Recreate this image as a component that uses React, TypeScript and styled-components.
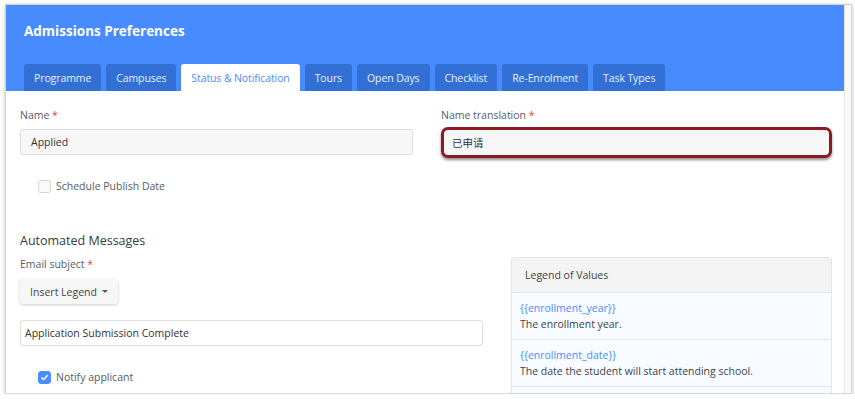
import * as React from 'react'
import styled, { createGlobalStyle } from 'styled-components'

const GlobalStyle = createGlobalStyle`
  html, body {
    margin: 0;
    padding: 0;
    background: #ffffff;
    font-family: 'Open Sans', 'Noto Sans CJK SC', sans-serif;
  }
`

const tabs = ['Programme', 'Campuses', 'Status & Notification', 'Tours', 'Open Days', 'Checklist', 'Re-Enrolment', 'Task Types']

const legend = [
  { key: '{{enrollment_year}}', text: 'The enrollment year.' },
  { key: '{{enrollment_date}}', text: 'The date the student will start attending school.' }
]

const Window = styled.div`
  margin: 4px 3px 0 5px;
  height: 390px;
  border: 1px solid #d4d4d4;
  box-shadow: 0 1px 4px rgba(0, 0, 0, 0.25);
  display: flex;
  overflow: hidden;
  box-sizing: border-box;
  background: #fff;
`

const Main = styled.div`
  flex: 1;
  min-width: 0;
`

const Gutter = styled.div`
  width: 6px;
  border-left: 1px solid #e6e6e6;
  background: #fafafa;
`

const Header = styled.div`
  background: #478bff;
  height: 86px;
  padding: 0 18px;
  display: flex;
  flex-direction: column;
  justify-content: space-between;
`

const Title = styled.h1`
  margin: 16px 0 0;
  color: #fff;
  font-size: 13.5px;
  font-weight: 700;
  line-height: 20px;
`

const TabRow = styled.div`
  display: flex;
  gap: 5px;
`

const Tab = styled.div<{ $active?: boolean }>`
  height: 27px;
  padding: 0 10px;
  display: flex;
  align-items: center;
  border-radius: 3px 3px 0 0;
  font-size: 10.5px;
  letter-spacing: -0.1px;
  background: ${p => (p.$active ? '#ffffff' : '#3270d6')};
  color: ${p => (p.$active ? '#4a8cff' : '#e9f0ff')};
`

const Body = styled.div`
  padding: 16px 12px 0 14px;
`

const Columns = styled.div<{ $left: number }>`
  display: grid;
  grid-template-columns: ${p => p.$left}px 1fr;
  column-gap: 28px;
  align-items: start;
`

const Label = styled.div`
  font-size: 10.5px;
  line-height: 16px;
  color: #555c66;
`

const Req = styled.span`
  color: #e8413b;
`

const Input = styled.div<{ $tone?: 'filled' | 'plain' }>`
  margin-top: 6px;
  height: 26px;
  box-sizing: border-box;
  border: 1px solid #dcdcdc;
  border-radius: 3px;
  padding: 0 10px;
  display: flex;
  align-items: center;
  font-size: 10.5px;
  color: #333;
  background: ${p => (p.$tone === 'plain' ? '#ffffff' : '#f7f7f7')};
`

const Highlight = styled(Input)`
  margin-top: 4px;
  height: 31px;
  border: 3px solid #8c1a1f;
  border-radius: 7px;
  background: #f7f7f7;
  box-shadow: 0 2px 3px rgba(0, 0, 0, 0.45);
  padding: 0 8px;
`

const CheckRow = styled.label<{ $top: number }>`
  margin: ${p => p.$top}px 0 0 18px;
  height: 16px;
  display: flex;
  align-items: center;
  gap: 5px;
  font-size: 10.5px;
  color: #555c66;
`

const Box = styled.span<{ $checked?: boolean }>`
  width: 13px;
  height: 13px;
  box-sizing: border-box;
  border-radius: 3px;
  display: flex;
  align-items: center;
  justify-content: center;
  border: 1px solid ${p => (p.$checked ? '#4a8cff' : '#d6d6d6')};
  background: ${p => (p.$checked ? '#4a8cff' : '#fafafa')};
`

const SectionTitle = styled.h2`
  margin: 37px 0 5px;
  font-size: 12.5px;
  font-weight: 400;
  line-height: 20px;
  color: #333a44;
`

const Button = styled.div`
  margin-top: 7px;
  width: 98px;
  height: 25px;
  box-sizing: border-box;
  display: flex;
  align-items: center;
  justify-content: center;
  gap: 5px;
  border-radius: 3px;
  background: #f7f7f7;
  box-shadow: 0 1px 3px rgba(0, 0, 0, 0.2);
  font-size: 10.5px;
  color: #444;
`

const Caret = styled.span`
  width: 0;
  height: 0;
  border-left: 3px solid transparent;
  border-right: 3px solid transparent;
  border-top: 3px solid #555;
`

const SubjectInput = styled(Input)`
  margin-top: 16px;
  padding: 0 4px;
`

const Panel = styled.div`
  margin-top: 1px;
  border: 1px solid #e2e5ea;
  border-radius: 3px 3px 0 0;
`

const PanelHead = styled.div`
  height: 34px;
  padding: 0 13px;
  display: flex;
  align-items: center;
  background: #f3f3f3;
  border-bottom: 1px solid #e2e5ea;
  font-size: 10.5px;
  color: #444;
`

const Item = styled.div`
  padding: 7px 8px 7px;
  background: #f8fbff;
  border-bottom: 1px solid #e2e8f0;
  font-size: 10.5px;
  line-height: 16px;
`

const Filler = styled.div`
  height: 40px;
  background: #f8fbff;
`

const Key = styled.div`
  color: #4a8cff;
`

const Desc = styled.div`
  color: #3d434b;
`

const Check = () => (
  <svg width='9' height='9' viewBox='0 0 10 10'>
    <path d='M1.8 5.2 L4 7.3 L8.3 2.8' fill='none' stroke='#fff' strokeWidth='1.6' strokeLinecap='round' strokeLinejoin='round' />
  </svg>
)

const App: React.FunctionComponent = () => (
  <>
    <GlobalStyle />
    <Window>
      <Main>
        <Header>
          <Title>Admissions Preferences</Title>
          <TabRow>
            { tabs.map(t => <Tab key={t} $active={t === 'Status & Notification'}>{ t }</Tab>) }
          </TabRow>
        </Header>
        <Body>
          <Columns $left={393}>
            <div>
              <Label>Name <Req>*</Req></Label>
              <Input>Applied</Input>
              <CheckRow $top={23}>
                <Box />
                Schedule Publish Date
              </CheckRow>
            </div>
            <div>
              <Label>Name translation <Req>*</Req></Label>
              <Highlight>已申请</Highlight>
            </div>
          </Columns>
          <SectionTitle>Automated Messages</SectionTitle>
          <Columns $left={463}>
            <div>
              <Label>Email subject <Req>*</Req></Label>
              <Button>Insert Legend <Caret /></Button>
              <SubjectInput $tone='plain'>Application Submission Complete</SubjectInput>
              <CheckRow $top={23}>
                <Box $checked><Check /></Box>
                Notify applicant
              </CheckRow>
            </div>
            <Panel>
              <PanelHead>Legend of Values</PanelHead>
              { legend.map(l => (
                <Item key={l.key}>
                  <Key>{ l.key }</Key>
                  <Desc>{ l.text }</Desc>
                </Item>
              )) }
              <Filler />
            </Panel>
          </Columns>
        </Body>
      </Main>
      <Gutter />
    </Window>
  </>
)

export default App
